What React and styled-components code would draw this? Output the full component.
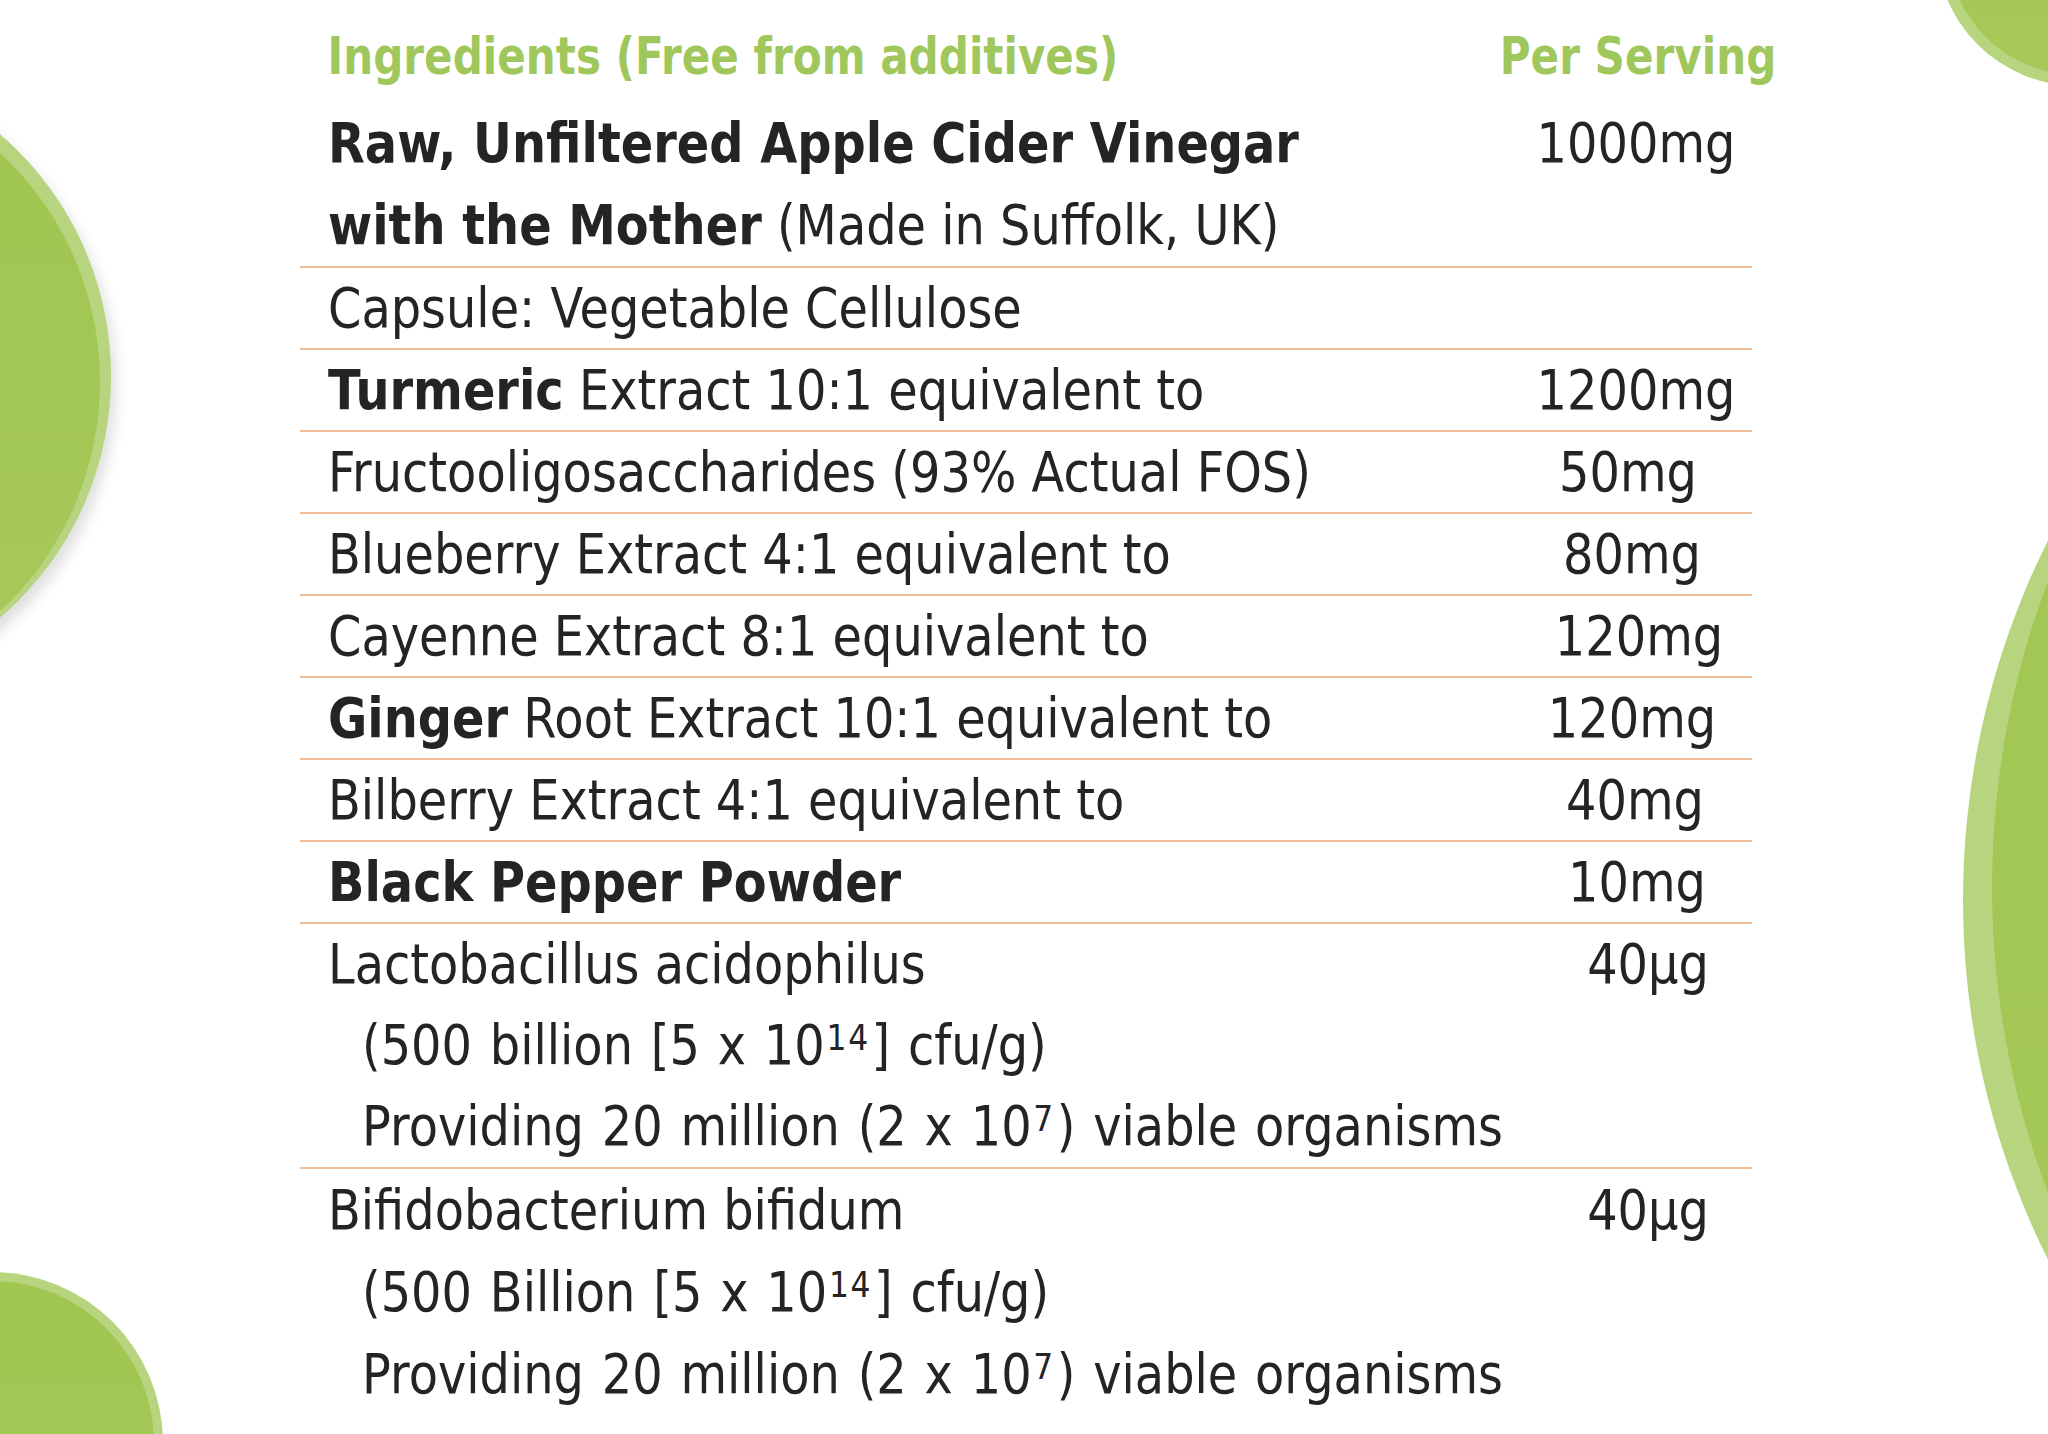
import React from "react";
import styled, { createGlobalStyle } from "styled-components";

const GlobalStyle = createGlobalStyle`
  html, body { margin: 0; padding: 0; background: #ffffff; }
  body { font-family: "DejaVu Sans", Verdana, sans-serif; }
`;

const Page = styled.div`
  position: relative;
  width: 2048px;
  height: 1434px;
  overflow: hidden;
  background: #ffffff;
`;

const Circle = styled.div`
  position: absolute;
  left: ${(p) => p.$cx - p.$r}px;
  top: ${(p) => p.$cy - p.$r}px;
  width: ${(p) => 2 * p.$r}px;
  height: ${(p) => 2 * p.$r}px;
  border-radius: 50%;
  background: #b7d57e;
  overflow: hidden;
  box-shadow: ${(p) => p.$shadow || "none"};
  &::after {
    content: "";
    position: absolute;
    border-radius: 50%;
    left: ${(p) => p.$d + (p.$ox || 0)}px;
    top: ${(p) => p.$d + (p.$oy || 0)}px;
    width: ${(p) => 2 * (p.$r - p.$d)}px;
    height: ${(p) => 2 * (p.$r - p.$d)}px;
    background: linear-gradient(180deg, #a0c550 0%, #a6c95a 100%);
  }
`;

const Sheet = styled.div`
  position: relative;
  z-index: 1;
  margin-left: 300px;
  width: 1452px;
  color: #252323;
  font-size: 55px;
`;

const HeaderRow = styled.div`
  display: grid;
  grid-template-columns: 1220px 232px;
  padding: 26px 0 16px;
  font-size: 52px;
  line-height: 60px;
  font-weight: 700;
  color: #a0c75b;
`;

const HeaderLabel = styled.div`
  padding-left: 34px;
  white-space: nowrap;
  transform: scaleX(0.81);
  transform-origin: left center;
`;

const HeaderValue = styled.div`
  display: flex;
  justify-content: center;
  white-space: nowrap;
  transform: translateX(2px) scaleX(0.81);
  transform-origin: center center;
`;

const Row = styled.div`
  display: grid;
  grid-template-columns: 1220px 232px;
  line-height: ${(p) => p.$lh}px;
  border-bottom: ${(p) => (p.$last ? "none" : "2px solid #f1bd97")};
`;

const Label = styled.div`
  padding-left: 28px;
  min-width: 0;
`;

const Line = styled.div`
  white-space: nowrap;
  margin-left: ${(p) => p.$indent || 0}px;
  word-spacing: ${(p) => (p.$indent ? 3 : 0)}px;
  transform: scaleX(0.87);
  transform-origin: left center;
`;

const Value = styled.div`
  display: flex;
  justify-content: center;
  align-items: flex-start;
  white-space: nowrap;
  transform: translateX(${(p) => p.$shift || 0}px) scaleX(0.87);
  transform-origin: center center;
`;

const B = styled.b`
  font-weight: 700;
`;

const Sup = styled.span`
  font-size: 36px;
  line-height: 0;
  vertical-align: 14px;
  letter-spacing: 2px;
  margin: 0 2px 0 2px;
`;

const rows = [
  {
    lh: 82,
    value: "1000mg",
    lines: [
      [<B key="a">Raw, Unfiltered Apple Cider Vinegar</B>],
      [<B key="a">with the Mother</B>, " (Made in Suffolk, UK)"],
    ],
  },
  { lh: 80, value: "", lines: [["Capsule: Vegetable Cellulose"]] },
  {
    lh: 80,
    value: "1200mg",
    lines: [[<B key="a">Turmeric</B>, " Extract 10:1 equivalent to"]],
  },
  { lh: 80, value: "50mg", shift: -8, lines: [["Fructooligosaccharides (93% Actual FOS)"]] },
  { lh: 80, value: "80mg", shift: -4, lines: [["Blueberry Extract 4:1 equivalent to"]] },
  { lh: 80, value: "120mg", shift: 3, lines: [["Cayenne Extract 8:1 equivalent to"]] },
  {
    lh: 80,
    value: "120mg",
    shift: -4,
    lines: [[<B key="a">Ginger</B>, " Root Extract 10:1 equivalent to"]],
  },
  { lh: 80, value: "40mg", shift: -1, lines: [["Bilberry Extract 4:1 equivalent to"]] },
  { lh: 80, value: "10mg", shift: 1, lines: [[<B key="a">Black Pepper Powder</B>]] },
  {
    lh: 81,
    value: "40µg",
    shift: 12,
    lines: [
      ["Lactobacillus acidophilus"],
      ["(500 billion [5 x 10", <Sup key="s">14</Sup>, "] cfu/g)"],
      ["Providing 20 million (2 x 10", <Sup key="s">7</Sup>, ") viable organisms"],
    ],
    indentSub: true,
  },
  {
    lh: 82,
    value: "40µg",
    shift: 12,
    lines: [
      ["Bifidobacterium bifidum"],
      ["(500 Billion [5 x 10", <Sup key="s">14</Sup>, "] cfu/g)"],
      ["Providing 20 million (2 x 10", <Sup key="s">7</Sup>, ") viable organisms"],
    ],
    indentSub: true,
  },
];

export default function App() {
  return (
    <>
      <GlobalStyle />
      <Page>
        <Circle $cx={-208} $cy={376} $r={319} $d={6} $ox={-5} $oy={6} $shadow="5px 9px 14px rgba(0,0,0,0.13)" />
        <Circle $cx={2078} $cy={-56} $r={142} $d={11} />
        <Circle $cx={2766} $cy={900} $r={803} $d={-60} $ox={89} $oy={-13} />
        <Circle $cx={-8} $cy={1443} $r={171} $d={9} />
        <Sheet>
          <HeaderRow>
            <HeaderLabel>Ingredients (Free from additives)</HeaderLabel>
            <HeaderValue>Per Serving</HeaderValue>
          </HeaderRow>
          {rows.map((row, i) => (
            <Row key={i} $lh={row.lh} $last={i === rows.length - 1}>
              <Label>
                {row.lines.map((parts, j) => (
                  <Line key={j} $indent={row.indentSub && j > 0 ? 34 : 0}>
                    {parts}
                  </Line>
                ))}
              </Label>
              <Value $shift={row.shift}>{row.value}</Value>
            </Row>
          ))}
        </Sheet>
      </Page>
    </>
  );
}
